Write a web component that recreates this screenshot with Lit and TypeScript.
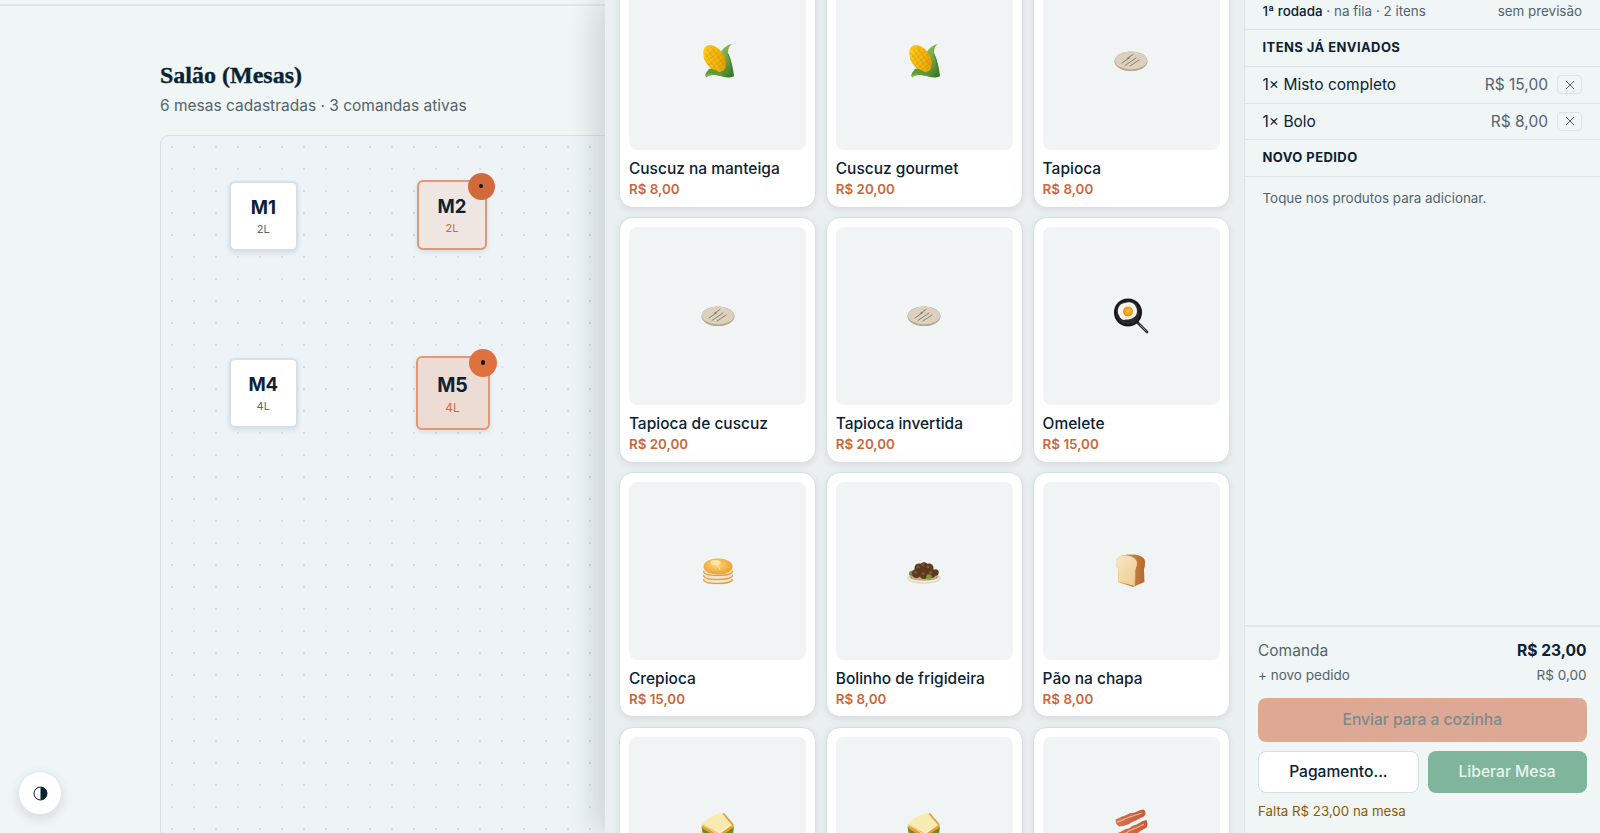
import { LitElement, html, css, svg } from "lit";
import { customElement } from "lit/decorators.js";

const defs = svg`<defs>
<linearGradient id="cornK" x1="0" y1="0" x2="1" y2="1"><stop offset="0" stop-color="#ffd21f"/><stop offset=".6" stop-color="#f2b50c"/><stop offset="1" stop-color="#d98f06"/></linearGradient>
<linearGradient id="cornL" x1="0" y1="0" x2="1" y2="1"><stop offset="0" stop-color="#b4d06c"/><stop offset=".6" stop-color="#6ea441"/><stop offset="1" stop-color="#2f6b26"/></linearGradient>
<linearGradient id="bread" x1="0" y1="0" x2="1" y2="1"><stop offset="0" stop-color="#f7e7c6"/><stop offset="1" stop-color="#eecb8e"/></linearGradient>
<linearGradient id="crust" x1="0" y1="0" x2="1" y2="0"><stop offset="0" stop-color="#e0a65a"/><stop offset="1" stop-color="#b4692a"/></linearGradient>
<radialGradient id="cake" cx=".45" cy=".4" r=".65"><stop offset="0" stop-color="#ffd778"/><stop offset="1" stop-color="#ea9a2a"/></radialGradient>
<radialGradient id="yolk" cx=".5" cy=".45" r=".55"><stop offset="0" stop-color="#ffc23c"/><stop offset="1" stop-color="#ee8a10"/></radialGradient>
<linearGradient id="bacon" x1="0" y1="1" x2="1" y2="0"><stop offset="0" stop-color="#d9744a"/><stop offset="1" stop-color="#c25a36"/></linearGradient>
</defs>`;

const icons: Record<string, unknown> = {
  corn: svg`<path d="M21 9c2-4 6-7 11-8-3 2-4 5-4 9 3 6 5 14 6 23-5 3-12 1-17-2l-3 1c-3 0-7 1-8 3 0-5 3-8 7-10z" fill="url(#cornL)"/><path d="M28 11c3 7 4 14 4 21" stroke="#3f7a2c" stroke-width=".8" fill="none"/><ellipse cx="14.500" cy="15.500" rx="9.500" ry="14.800" transform="rotate(-33 14.500 15.500)" fill="url(#cornK)"/><g stroke="#b97c06" stroke-width=".5" opacity=".7" fill="none"><path d="M7 6l16 23M11 4l15 21M5 10l14 21M4 15l10 14"/><path d="M6 14l9-8M7 18l12-10M9 22l13-11M12 25l12-10M15 28l9-8"/></g><path d="M9 26c4-1 9 2 13 6 2 1 5 1 5 1-6 1-13-1-16-3-2 0-5 2-6 4 0-3 2-6 4-8z" fill="#5f9a38"/>`,
  tapioca: svg`<ellipse cx="18" cy="18.300" rx="16.500" ry="9.800" fill="#b3a68d"/><ellipse cx="18" cy="17.500" rx="16" ry="9" fill="#dbd1bd"/><path d="M9 20l8-5.500M12 22.500l11-7.500M17 23l9-6M14 15.500l6-4" stroke="#7e7767" stroke-width=".9" stroke-linecap="round"/>`,
  pan: svg`<path d="M24 24l10 10" stroke="#34373a" stroke-width="2.800" stroke-linecap="round"/><path d="M27 27l6 6" stroke="#8f9396" stroke-width=".8"/><circle cx="15" cy="14.500" r="14" fill="#141618"/><circle cx="15" cy="14.500" r="12" fill="#26292c"/><path d="M5 15C4 9 8 5 12 5c4-2 10 0 11 4 2 4 1 9-3 11-3 2-6 1-9 2-3 0-5-4-6-7z" fill="#fbf6e9"/><circle cx="15" cy="13.500" r="5" fill="url(#yolk)"/>`,
  pancake: svg`<path d="M3.500 14v13c0 3 6.500 4.500 14.500 4.500S32.500 30 32.500 27V14z" fill="#f6e3c2"/><path d="M3.500 18c0 3 6.500 4.500 14.500 4.500s14.500-1.500 14.500-4.500M3.500 22c0 3 6.500 4.500 14.500 4.500s14.500-1.500 14.500-4.500M3.500 26c0 3 6.500 4.500 14.500 4.500s14.500-1.500 14.500-4.500" fill="none" stroke="#d69a55" stroke-width="1.200"/><ellipse cx="18" cy="13.500" rx="14.500" ry="8" fill="url(#cake)"/><ellipse cx="15.500" cy="9.500" rx="5" ry="2.600" fill="#ffe7a8"/><path d="M14 11l5 3 1 3" stroke="#ffe7a8" stroke-width="1" fill="none"/>`,
  falafel: svg`<ellipse cx="18" cy="25.200" rx="16.300" ry="5" fill="#f1ece0" stroke="#c4bda9" stroke-width=".6"/><ellipse cx="18" cy="24" rx="14.500" ry="3.800" fill="#c4ab80"/><ellipse cx="6.500" cy="20.500" rx="3.500" ry="2.800" fill="#6f8f3a"/><g fill="#5b3a20"><circle cx="10.500" cy="20.500" r="4.500"/><circle cx="25.500" cy="20.500" r="4.500"/><circle cx="18" cy="21.500" r="4.600"/><circle cx="13" cy="15" r="4.500"/><circle cx="23" cy="15" r="4.500"/><circle cx="18" cy="13.500" r="4.200"/><circle cx="29.500" cy="19.500" r="3.200"/></g><g fill="#80592f"><circle cx="12" cy="14" r="1.500"/><circle cx="22" cy="14" r="1.500"/><circle cx="17" cy="12" r="1.400"/><circle cx="9.500" cy="19.500" r="1.500"/><circle cx="17" cy="20.500" r="1.500"/><circle cx="24.500" cy="19.500" r="1.500"/></g><circle cx="23" cy="24" r="2.800" fill="#7f9a3c"/>`,
  bread: svg`<path d="M3 10C2 4 9 1.500 18 1.500S33 4 32 11c0 3-1 4-1 6l.500 12L20 34 5 29l.500-13C4 14 3 13 3 10z" fill="url(#crust)"/><path d="M3 10c-1-5 4-7.500 9-7.500 6 0 12 2.500 12 8 0 3-1.500 4-1.500 6L22 33 5.200 28.500l.5-12.500C4 14 3 13 3 10z" fill="url(#bread)"/><path d="M22.500 17l-.5 16" stroke="#c98a44" stroke-width=".6"/>`,
  sandwich: svg`<path d="M2 19l16 10 15.500-10v7L18 35 2 26z" fill="#e6ae58"/><path d="M1.500 18.500l16.500 11 16-11-1 6L18 33 2.500 24z" fill="#5f8f2c"/><path d="M2 16.500l16 10.500 15.500-11v3.500L18 30 2.500 20.500z" fill="#f29c1e"/><path d="M23.600 4.600L33.500 16 18 24.500 2 16c5-6 13-10 21.600-11.400z" fill="#f9eab0"/><path d="M23.600 4.600L33.500 16l-1 1.500-9.500-11z" fill="#d99f4e"/><path d="M2 16l16 8.500v1.500L2.500 18z" fill="#eac57c"/>`,
  bacon: svg`<path d="M3 11c3 0 5-3 8-3 3-1 5-3 8-3 4 0 6-3 12-3.500 2 2 2 5 0 7-3 1-6 3-8 4-4 1-5 3-8 4-4 1-6 2-9 2-3-2-4-5-3-7.500z" fill="url(#bacon)"/><path d="M4 14c5-1 7-3 10-4s8-3 15-5" stroke="#f0b08c" stroke-width="1.300" fill="none"/><path d="M5 25c3-1 5-3 8-4 4 0 5-3 8-3.500 4-1 6-4 12-5.500 2 2 2 6 0 8-3 1-6 3-8 5-3 1-5 3-8 4-4 1-7 3-10 3-3-2-3-5-2-7z" fill="url(#bacon)"/><path d="M6 28c5-1 7-3 10-5s8-3 15-7" stroke="#f0b08c" stroke-width="1.300" fill="none"/>`,
};

interface P { n: string; p: string; i: string }
const products: P[] = [
  { n: "Cuscuz na manteiga", p: "R$ 8,00", i: "corn" },
  { n: "Cuscuz gourmet", p: "R$ 20,00", i: "corn" },
  { n: "Tapioca", p: "R$ 8,00", i: "tapioca" },
  { n: "Tapioca de cuscuz", p: "R$ 20,00", i: "tapioca" },
  { n: "Tapioca invertida", p: "R$ 20,00", i: "tapioca" },
  { n: "Omelete", p: "R$ 15,00", i: "pan" },
  { n: "Crepioca", p: "R$ 15,00", i: "pancake" },
  { n: "Bolinho de frigideira", p: "R$ 8,00", i: "falafel" },
  { n: "Pão na chapa", p: "R$ 8,00", i: "bread" },
  { n: "", p: "", i: "sandwich" },
  { n: "", p: "", i: "sandwich" },
  { n: "", p: "", i: "bacon" },
];

@customElement("app-root")
export class AppRoot extends LitElement {
  static styles = css`
    :host { display: block; width: 1600px; height: 833px; overflow: hidden; position: relative; background: #f0f5f6; font-family: Inter, "Liberation Sans", sans-serif; color: #0b2233; }
    * { box-sizing: border-box; }
    .layout { display: flex; height: 833px; }
    .page { width: 605px; flex: none; overflow: hidden; }
    .topline { height: 6px; border-bottom: 2px solid #e1e7e9; width: 1600px; }
    .main { padding: 55px 0 0 160px; width: 1600px; }
    h1 { margin: 0; font: 700 24px/28px "Liberation Serif", serif; color: #0b2233; -webkit-text-stroke: .35px #0b2233; }
    .sub { margin-top: 6px; font-size: 15.500px; line-height: 22px; color: #55636b; }
    .canvas { position: relative; margin-top: 17.500px; width: 1000px; height: 900px; border: 1px solid #d9e0e3; border-radius: 9px; background-color: #edf3f6; background-image: radial-gradient(circle, #d4dce0 .8px, transparent 1.1px); background-size: 22px 22px; }
    .table { position: absolute; display: flex; flex-direction: column; align-items: center; justify-content: center; background: #fff; border: 2px solid #d9dfe2; border-radius: 6px; box-shadow: 0 2px 5px rgba(11,34,51,.1); }
    .table b { font-size: 18.500px; line-height: 22px; font-weight: 700; color: #0b2233; }
    .table span { font-size: 11px; line-height: 14px; margin-top: 4px; color: #5a6770; }
    .table.busy { background: #efe5e1; border-color: #dd9a7a; }
    .table.busy span { color: #cf6a3c; }
    .table.big { background: #ecdcd4; border-color: #e59773; padding-top: 2px; }
    .table.big b { font-size: 19.500px; }
    .table.big span { font-size: 12px; margin-top: 5px; }
    .badge { position: absolute; width: 27px; height: 27px; border-radius: 50%; background: #d2693a; top: -9.500px; right: -9.500px; display: flex; align-items: center; justify-content: center; }
    .big .badge { background: #e0703e; width: 28px; height: 28px; }
    .badge i { width: 4.500px; height: 4.500px; border-radius: 50%; background: #0b1a22; }
    .theme { position: absolute; left: 18px; top: 771px; width: 44px; height: 44px; border-radius: 50%; background: #fff; border: 1px solid #e1e6e8; box-shadow: 0 4px 12px rgba(11,34,51,.12); display: flex; align-items: center; justify-content: center; padding: 0; }
    .panel { position: relative; flex: 1; display: flex; box-shadow: -8px 0 30px rgba(11,34,51,.16); background: #eaeff1; }
    .products { width: 639px; flex: none; overflow: hidden; padding: 0 14px; }
    .grid { display: grid; grid-template-columns: repeat(3, 1fr); gap: 9.600px; margin-top: -37.300px; }
    .card { background: #fff; border: 1px solid #d9e0e3; border-radius: 14px; padding: 8.900px; box-shadow: 0 2px 7px rgba(11,34,51,.09); height: 245.200px; }
    .img { aspect-ratio: 1; background: #f1f4f5; border-radius: 8px; display: flex; align-items: center; justify-content: center; }
    .img svg { width: 36px; height: 36px; }
    .name { margin-top: 9px; font-size: 15.500px; line-height: 20px; font-weight: 500; color: #0b2233; white-space: nowrap; }
    .price { font-size: 13.400px; line-height: 20px; font-weight: 600; color: #c9683c; }
    .cart { flex: 1; display: flex; flex-direction: column; background: #f0f5f6; border-left: 1px solid #dfe5e7; }
    .scroll { flex: 1; }
    .row { display: flex; justify-content: space-between; align-items: center; padding: 0 18px 0 17.500px; border-bottom: 1px solid #dfe5e7; }
    .round { height: 30px; font-size: 13.400px; color: #55636b; align-items: flex-start; line-height: 22px; }
    .round b { font-weight: 500; color: #0b2233; }
    .sec { height: 37px; padding-bottom: 2px; font-size: 13px; font-weight: 700; letter-spacing: .42px; color: #0b2233; }
    .item { height: 36.500px; font-size: 15.500px; color: #0b2233; }
    .right { display: flex; align-items: center; gap: 9px; color: #55636b; }
    .x { width: 25px; height: 19px; border: 1px solid #dde3e6; border-radius: 4px; background: transparent; display: flex; align-items: center; justify-content: center; padding: 0; }
    .hint { padding: 12px 17.500px; font-size: 13.400px; line-height: 18px; color: #55636b; }
    .foot { height: 208px; flex: none; border-top: 2px solid #e2e8ea; padding: 13px 13.500px 0 13px; display: flex; flex-direction: column; }
    .line { display: flex; justify-content: space-between; align-items: center; }
    .l1 { font-size: 15.500px; line-height: 22px; color: #55636b; }
    .l1 b { font-size: 15.600px; font-weight: 700; color: #0b2233; }
    .l2 { font-size: 13.500px; line-height: 20px; color: #55636b; margin-top: 3px; }
    .btn { border: none; border-radius: 8px; font: 500 15.600px Inter, sans-serif; display: flex; align-items: center; justify-content: center; padding: 0; }
    .send { height: 44.300px; flex: none; margin-top: 12.700px; background: #dea994; color: #7b8a8d; }
    .two { display: flex; gap: 9px; margin-top: 9px; }
    .two .btn { flex: 1; height: 41.700px; }
    .pay { background: #fff; border: 1px solid #d7dee1; color: #0b2233; }
    .free { background: #7fb59a; color: #e8f3ee; }
    .warn { margin-top: 9px; font-size: 13.300px; line-height: 18px; color: #8a5a00; }
  `;

  render() {
    return html`<div class="layout">
      <div class="page">
        <div class="topline"></div>
        <div class="main">
          <h1>Salão (Mesas)</h1>
          <div class="sub">6 mesas cadastradas · 3 comandas ativas</div>
          <div class="canvas">
            ${this.table("M1", "2L", 67.5, 45.5, 69.5, false, false)}
            ${this.table("M2", "2L", 256, 44.5, 70, true, false)}
            ${this.table("M4", "4L", 67.5, 222.5, 69.5, false, false)}
            ${this.table("M5", "4L", 254.5, 220.5, 74, true, true)}
          </div>
        </div>
      </div>
      <div class="panel">
        <div class="products"><div class="grid">
          ${products.map((p) => html`<div class="card">
            <div class="img"><svg viewBox="0 0 36 36">${defs}${icons[p.i]}</svg></div>
            ${p.n ? html`<div class="name">${p.n}</div><div class="price">${p.p}</div>` : ""}
          </div>`)}
        </div></div>
        <div class="cart">
          <div class="scroll">
            <div class="row round"><span><b>1ª rodada</b> · na fila · 2 itens</span><span>sem previsão</span></div>
            <div class="row sec">ITENS JÁ ENVIADOS</div>
            ${this.item("1× Misto completo", "R$ 15,00")}
            ${this.item("1× Bolo", "R$ 8,00")}
            <div class="row sec">NOVO PEDIDO</div>
            <div class="hint">Toque nos produtos para adicionar.</div>
          </div>
          <div class="foot">
            <div class="line l1"><span>Comanda</span><b>R$ 23,00</b></div>
            <div class="line l2"><span>+ novo pedido</span><span>R$ 0,00</span></div>
            <button class="btn send">Enviar para a cozinha</button>
            <div class="two"><button class="btn pay">Pagamento...</button><button class="btn free">Liberar Mesa</button></div>
            <div class="warn">Falta R$ 23,00 na mesa</div>
          </div>
        </div>
      </div>
    </div>
    <button class="theme"><svg width="15" height="15" viewBox="0 0 15 15"><circle cx="7.500" cy="7.500" r="6.500" fill="none" stroke="#0b2233" stroke-width="1"/><path d="M7.500 1a6.500 6.500 0 0 1 0 13z" fill="#0b2233"/></svg></button>`;
  }

  table(n: string, l: string, x: number, y: number, s: number, busy: boolean, big: boolean) {
    return html`<div class="table ${busy ? "busy" : ""} ${big ? "big" : ""}" style="left:${x}px;top:${y}px;width:${s}px;height:${s}px">
      <b>${n}</b><span>${l}</span>${busy ? html`<div class="badge"><i></i></div>` : ""}
    </div>`;
  }

  item(n: string, p: string) {
    return html`<div class="row item"><span>${n}</span><span class="right">${p}<button class="x"><svg width="12" height="12" viewBox="0 0 12 12"><path d="M2 2l8 8M10 2l-8 8" stroke="#55636b" stroke-width="1"/></svg></button></span></div>`;
  }
}
